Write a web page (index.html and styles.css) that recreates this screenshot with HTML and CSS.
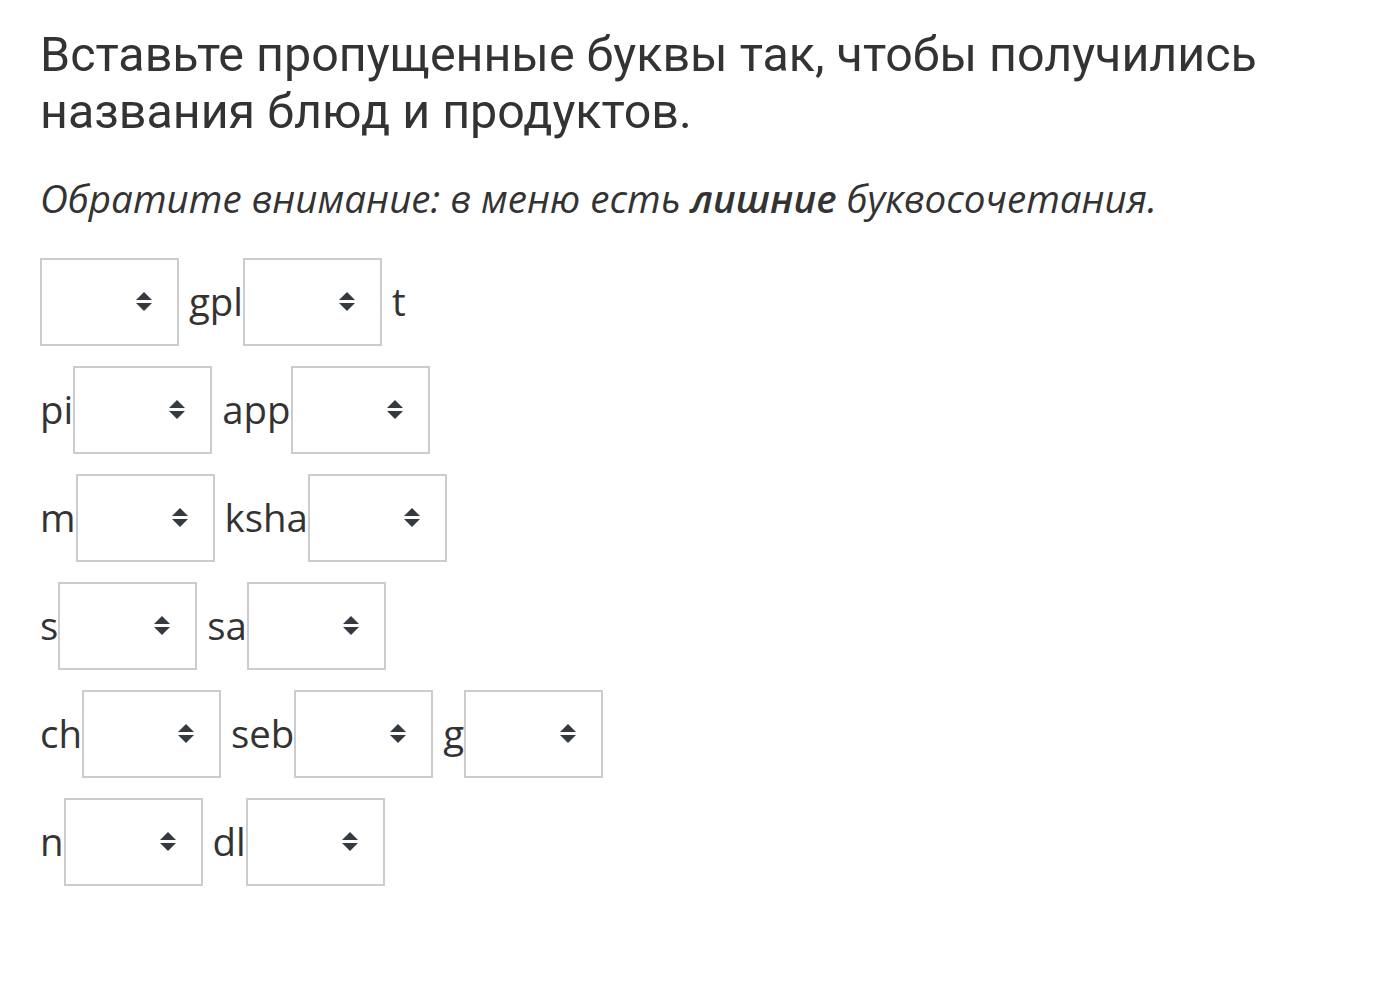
FILE: index.html
```html
<!DOCTYPE html>
<html lang="ru">
<head>
<meta charset="utf-8">
<title>Задание</title>
<link rel="stylesheet" href="styles.css">
</head>
<body>
<div class="page">
  <h1 class="title">Вставьте пропущенные буквы так, чтобы получились названия блюд и продуктов.</h1>
  <p class="note">Обратите внимание: в меню есть <b>лишние</b> буквосочетания.</p>

  <div class="row">
    <span class="sel"><svg class="arr" viewBox="0 0 16 20"><path d="M8 0L16 8H0Z"/><path d="M0 11H16L8 19Z"/></svg></span>
    <span class="t sp">gpl</span>
    <span class="sel"><svg class="arr" viewBox="0 0 16 20"><path d="M8 0L16 8H0Z"/><path d="M0 11H16L8 19Z"/></svg></span>
    <span class="t sp">t</span>
  </div>

  <div class="row">
    <span class="t">pi</span>
    <span class="sel"><svg class="arr" viewBox="0 0 16 20"><path d="M8 0L16 8H0Z"/><path d="M0 11H16L8 19Z"/></svg></span>
    <span class="t sp">app</span>
    <span class="sel"><svg class="arr" viewBox="0 0 16 20"><path d="M8 0L16 8H0Z"/><path d="M0 11H16L8 19Z"/></svg></span>
  </div>

  <div class="row">
    <span class="t">m</span>
    <span class="sel"><svg class="arr" viewBox="0 0 16 20"><path d="M8 0L16 8H0Z"/><path d="M0 11H16L8 19Z"/></svg></span>
    <span class="t sp">ksha</span>
    <span class="sel"><svg class="arr" viewBox="0 0 16 20"><path d="M8 0L16 8H0Z"/><path d="M0 11H16L8 19Z"/></svg></span>
  </div>

  <div class="row">
    <span class="t">s</span>
    <span class="sel"><svg class="arr" viewBox="0 0 16 20"><path d="M8 0L16 8H0Z"/><path d="M0 11H16L8 19Z"/></svg></span>
    <span class="t sp">sa</span>
    <span class="sel"><svg class="arr" viewBox="0 0 16 20"><path d="M8 0L16 8H0Z"/><path d="M0 11H16L8 19Z"/></svg></span>
  </div>

  <div class="row">
    <span class="t">ch</span>
    <span class="sel"><svg class="arr" viewBox="0 0 16 20"><path d="M8 0L16 8H0Z"/><path d="M0 11H16L8 19Z"/></svg></span>
    <span class="t sp">seb</span>
    <span class="sel"><svg class="arr" viewBox="0 0 16 20"><path d="M8 0L16 8H0Z"/><path d="M0 11H16L8 19Z"/></svg></span>
    <span class="t sp">g</span>
    <span class="sel"><svg class="arr" viewBox="0 0 16 20"><path d="M8 0L16 8H0Z"/><path d="M0 11H16L8 19Z"/></svg></span>
  </div>

  <div class="row">
    <span class="t">n</span>
    <span class="sel"><svg class="arr" viewBox="0 0 16 20"><path d="M8 0L16 8H0Z"/><path d="M0 11H16L8 19Z"/></svg></span>
    <span class="t sp">dl</span>
    <span class="sel"><svg class="arr" viewBox="0 0 16 20"><path d="M8 0L16 8H0Z"/><path d="M0 11H16L8 19Z"/></svg></span>
  </div>
</div>
</body>
</html>
```
FILE: styles.css
```css
html, body {
  margin: 0;
  padding: 0;
  background: #ffffff;
}
.page {
  padding: 26px 40px 40px 40px;
  color: #333333;
  font-family: "Open Sans", "Noto Sans", sans-serif;
}
.title {
  font-family: Roboto, "Noto Sans", sans-serif;
  font-weight: 400;
  font-size: 48.4px;
  line-height: 57px;
  margin: 0;
}
.note {
  font-style: italic;
  font-size: 38.6px;
  line-height: 48px;
  margin: 34px 0 36px 0;
}
.note b {
  font-weight: 600;
}
.row {
  display: flex;
  align-items: center;
  height: 88px;
  margin-bottom: 20px;
}
.t {
  font-size: 38.4px;
  line-height: 39px;
  padding-bottom: 1px;
}
.sp {
  margin-left: 10px;
}
.sel {
  box-sizing: border-box;
  width: 139px;
  height: 88px;
  border: 2px solid #cccccc;
  display: flex;
  align-items: center;
  justify-content: flex-end;
  padding-right: 25px;
  background: #ffffff;
}
.arr {
  width: 16px;
  height: 20px;
  fill: #343a40;
}
```
